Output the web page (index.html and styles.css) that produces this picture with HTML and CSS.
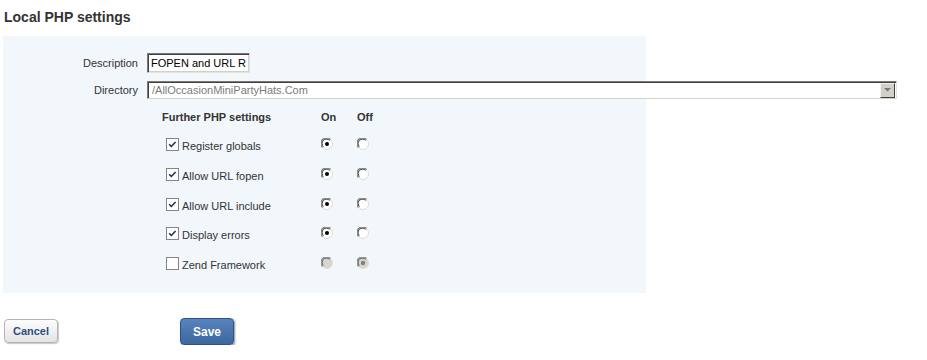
FILE: index.html
```html
<!DOCTYPE html>
<html lang="en">
<head>
<meta charset="UTF-8">
<title>Local PHP settings</title>
<link rel="stylesheet" href="styles.css">
</head>
<body>
<h1 class="title">Local PHP settings</h1>

<div class="panel">
  <div class="field">
    <label class="label">Description</label>
    <input class="textbox" type="text" value="FOPEN and URL Restrictions">
  </div>
  <div class="field">
    <label class="label">Directory</label>
    <div class="dropdown">
      <span class="dropdown-value">/AllOccasionMiniPartyHats.Com</span>
      <span class="dropdown-btn">
        <svg width="7" height="4" viewBox="0 0 7 4"><path d="M0 0h7L3.5 3.5z" fill="#6b7a93"/></svg>
      </span>
    </div>
  </div>

  <div class="settings">
    <div class="head">Further PHP settings</div>
    <div class="head">On</div>
    <div class="head">Off</div>

    <div class="opt"><svg class="check" width="13" height="13" viewBox="0 0 13 13"><rect x="0.5" y="0.5" width="12" height="12" fill="#fff" stroke="#858585"/><path d="M3.2 6.2l2.1 2.2L9.6 4" fill="none" stroke="#1d2b4c" stroke-width="1.5"/></svg><span>Register globals</span></div>
    <div class="radio-cell"><svg class="radio" width="12" height="12" viewBox="0 0 12 12"><circle cx="6" cy="6" r="5.5" fill="#fff" stroke="#dedbd4"/><path d="M1.5 9.5A5.5 5.5 0 0 1 9.5 1.5" fill="none" stroke="#7d7d7d" stroke-width="1.2"/><path d="M2.4 8.6A4.3 4.3 0 0 1 8.6 2.4" fill="none" stroke="#3a3a3a"/><circle cx="6" cy="6" r="2" fill="#000"/></svg></div>
    <div class="radio-cell"><svg class="radio" width="12" height="12" viewBox="0 0 12 12"><circle cx="6" cy="6" r="5.5" fill="#fff" stroke="#dedbd4"/><path d="M1.5 9.5A5.5 5.5 0 0 1 9.5 1.5" fill="none" stroke="#7d7d7d" stroke-width="1.2"/><path d="M2.4 8.6A4.3 4.3 0 0 1 8.6 2.4" fill="none" stroke="#3a3a3a"/></svg></div>

    <div class="opt"><svg class="check" width="13" height="13" viewBox="0 0 13 13"><rect x="0.5" y="0.5" width="12" height="12" fill="#fff" stroke="#858585"/><path d="M3.2 6.2l2.1 2.2L9.6 4" fill="none" stroke="#1d2b4c" stroke-width="1.5"/></svg><span>Allow URL fopen</span></div>
    <div class="radio-cell"><svg class="radio" width="12" height="12" viewBox="0 0 12 12"><circle cx="6" cy="6" r="5.5" fill="#fff" stroke="#dedbd4"/><path d="M1.5 9.5A5.5 5.5 0 0 1 9.5 1.5" fill="none" stroke="#7d7d7d" stroke-width="1.2"/><path d="M2.4 8.6A4.3 4.3 0 0 1 8.6 2.4" fill="none" stroke="#3a3a3a"/><circle cx="6" cy="6" r="2" fill="#000"/></svg></div>
    <div class="radio-cell"><svg class="radio" width="12" height="12" viewBox="0 0 12 12"><circle cx="6" cy="6" r="5.5" fill="#fff" stroke="#dedbd4"/><path d="M1.5 9.5A5.5 5.5 0 0 1 9.5 1.5" fill="none" stroke="#7d7d7d" stroke-width="1.2"/><path d="M2.4 8.6A4.3 4.3 0 0 1 8.6 2.4" fill="none" stroke="#3a3a3a"/></svg></div>

    <div class="opt"><svg class="check" width="13" height="13" viewBox="0 0 13 13"><rect x="0.5" y="0.5" width="12" height="12" fill="#fff" stroke="#858585"/><path d="M3.2 6.2l2.1 2.2L9.6 4" fill="none" stroke="#1d2b4c" stroke-width="1.5"/></svg><span>Allow URL include</span></div>
    <div class="radio-cell"><svg class="radio" width="12" height="12" viewBox="0 0 12 12"><circle cx="6" cy="6" r="5.5" fill="#fff" stroke="#dedbd4"/><path d="M1.5 9.5A5.5 5.5 0 0 1 9.5 1.5" fill="none" stroke="#7d7d7d" stroke-width="1.2"/><path d="M2.4 8.6A4.3 4.3 0 0 1 8.6 2.4" fill="none" stroke="#3a3a3a"/><circle cx="6" cy="6" r="2" fill="#000"/></svg></div>
    <div class="radio-cell"><svg class="radio" width="12" height="12" viewBox="0 0 12 12"><circle cx="6" cy="6" r="5.5" fill="#fff" stroke="#dedbd4"/><path d="M1.5 9.5A5.5 5.5 0 0 1 9.5 1.5" fill="none" stroke="#7d7d7d" stroke-width="1.2"/><path d="M2.4 8.6A4.3 4.3 0 0 1 8.6 2.4" fill="none" stroke="#3a3a3a"/></svg></div>

    <div class="opt"><svg class="check" width="13" height="13" viewBox="0 0 13 13"><rect x="0.5" y="0.5" width="12" height="12" fill="#fff" stroke="#858585"/><path d="M3.2 6.2l2.1 2.2L9.6 4" fill="none" stroke="#1d2b4c" stroke-width="1.5"/></svg><span>Display errors</span></div>
    <div class="radio-cell"><svg class="radio" width="12" height="12" viewBox="0 0 12 12"><circle cx="6" cy="6" r="5.5" fill="#fff" stroke="#dedbd4"/><path d="M1.5 9.5A5.5 5.5 0 0 1 9.5 1.5" fill="none" stroke="#7d7d7d" stroke-width="1.2"/><path d="M2.4 8.6A4.3 4.3 0 0 1 8.6 2.4" fill="none" stroke="#3a3a3a"/><circle cx="6" cy="6" r="2" fill="#000"/></svg></div>
    <div class="radio-cell"><svg class="radio" width="12" height="12" viewBox="0 0 12 12"><circle cx="6" cy="6" r="5.5" fill="#fff" stroke="#dedbd4"/><path d="M1.5 9.5A5.5 5.5 0 0 1 9.5 1.5" fill="none" stroke="#7d7d7d" stroke-width="1.2"/><path d="M2.4 8.6A4.3 4.3 0 0 1 8.6 2.4" fill="none" stroke="#3a3a3a"/></svg></div>

    <div class="opt"><svg class="check" width="13" height="13" viewBox="0 0 13 13"><rect x="0.5" y="0.5" width="12" height="12" fill="#fff" stroke="#858585"/></svg><span>Zend Framework</span></div>
    <div class="radio-cell"><svg class="radio" width="12" height="12" viewBox="0 0 12 12"><circle cx="6" cy="6" r="5.5" fill="#d8d5cf" stroke="#dedbd4"/><path d="M1.5 9.5A5.5 5.5 0 0 1 9.5 1.5" fill="none" stroke="#8a8a8a" stroke-width="1.2"/><path d="M2.4 8.6A4.3 4.3 0 0 1 8.6 2.4" fill="none" stroke="#5a5a5a"/></svg></div>
    <div class="radio-cell"><svg class="radio" width="12" height="12" viewBox="0 0 12 12"><circle cx="6" cy="6" r="5.5" fill="#d8d5cf" stroke="#dedbd4"/><path d="M1.5 9.5A5.5 5.5 0 0 1 9.5 1.5" fill="none" stroke="#8a8a8a" stroke-width="1.2"/><path d="M2.4 8.6A4.3 4.3 0 0 1 8.6 2.4" fill="none" stroke="#5a5a5a"/><circle cx="6" cy="6" r="2.2" fill="#7f7f7f"/></svg></div>
  </div>
</div>

<div class="actions">
  <button class="btn btn-cancel">Cancel</button>
  <button class="btn btn-save">Save</button>
</div>
</body>
</html>
```

FILE: styles.css
```css
*{
    box-sizing:border-box;
}
body{
    margin:0;
    font-family:"Liberation Sans", Arial, sans-serif;
    font-size:11px;
    color:#333;
    background:#fff;
}
.title{
    margin:0;
    padding:9px 4px 0;
    font-size:14px;
    line-height:17px;
    font-weight:bold;
    color:#333;
}
.panel{
    margin:10px 0 0 3px;
    width:643px;
    height:257px;
    padding-top:17px;
    background:#f2f7fb;
}
.field{
    display:flex;
    align-items:center;
    margin-bottom:8px;
}
.label{
    flex:none;
    width:135px;
    margin-right:9px;
    text-align:right;
    line-height:13px;
}
.textbox{
    flex:none;
    width:103px;
    height:20px;
    margin:0;
    padding:0 3px;
    font-family:"Liberation Sans", Arial, sans-serif;
    font-size:11px;
    color:#000;
    background:#fff;
    border:1px solid;
    border-color:#7a7a7a #e6e3dc #e6e3dc #7a7a7a;
    box-shadow:inset 1px 1px #404040, inset -1px -1px #d4d0c8;
    outline:none;
}
.dropdown{
    flex:none;
    display:flex;
    align-items:center;
    width:750px;
    height:18px;
    background:#fff;
    border:1px solid;
    border-color:#7a7a7a #e6e3dc #d4d0c8 #7a7a7a;
    box-shadow:inset 1px 1px #404040;
}
.dropdown-value{
    flex:1;
    padding-left:4px;
    color:#7b7b7b;
    line-height:13px;
}
.dropdown-btn{
    display:flex;
    align-items:center;
    justify-content:center;
    width:15px;
    height:15px;
    margin-right:1px;
    background:#d4d0c8;
    border:1px solid;
    border-color:#f4f2ee #404040 #404040 #f4f2ee;
}
.settings{
    display:grid;
    grid-template-columns:159px 36px 40px;
    grid-template-rows:25px;
    grid-auto-rows:29.75px;
    margin:12px 0 0 159px;
}
.head{
    font-weight:bold;
    line-height:13px;
}
.opt{
    display:flex;
    align-items:flex-start;
    padding-left:4px;
}
.opt span{
    margin:4px 0 0 3px;
    line-height:13px;
}
.check{
    display:block;
    margin-top:2px;
}
.radio-cell{
    padding-top:2px;
}
.radio{
    display:block;
}
.actions{
    display:flex;
    align-items:flex-start;
    margin-top:26px;
    padding-left:4px;
}
.btn{
    margin:0;
    font-family:"Liberation Sans", Arial, sans-serif;
    font-weight:bold;
    font-size:11px;
    border-radius:4px;
    cursor:pointer;
}
.btn-cancel{
    width:54px;
    height:24px;
    padding:0;
    color:#2d4f7f;
    background:linear-gradient(#fdfdfd, #e4e4e4);
    border:1px solid #b4b4b4;
    box-shadow:1px 1px 1px #c8c8c8;
}
.btn-save{
    width:54px;
    height:27px;
    margin:-1px 0 0 122px;
    padding:0;
    color:#fff;
    font-size:12px;
    background:linear-gradient(#5983bd, #3d679f);
    border:1px solid #2f5385;
    box-shadow:1px 1px 2px #7d8fa8;
}
```
